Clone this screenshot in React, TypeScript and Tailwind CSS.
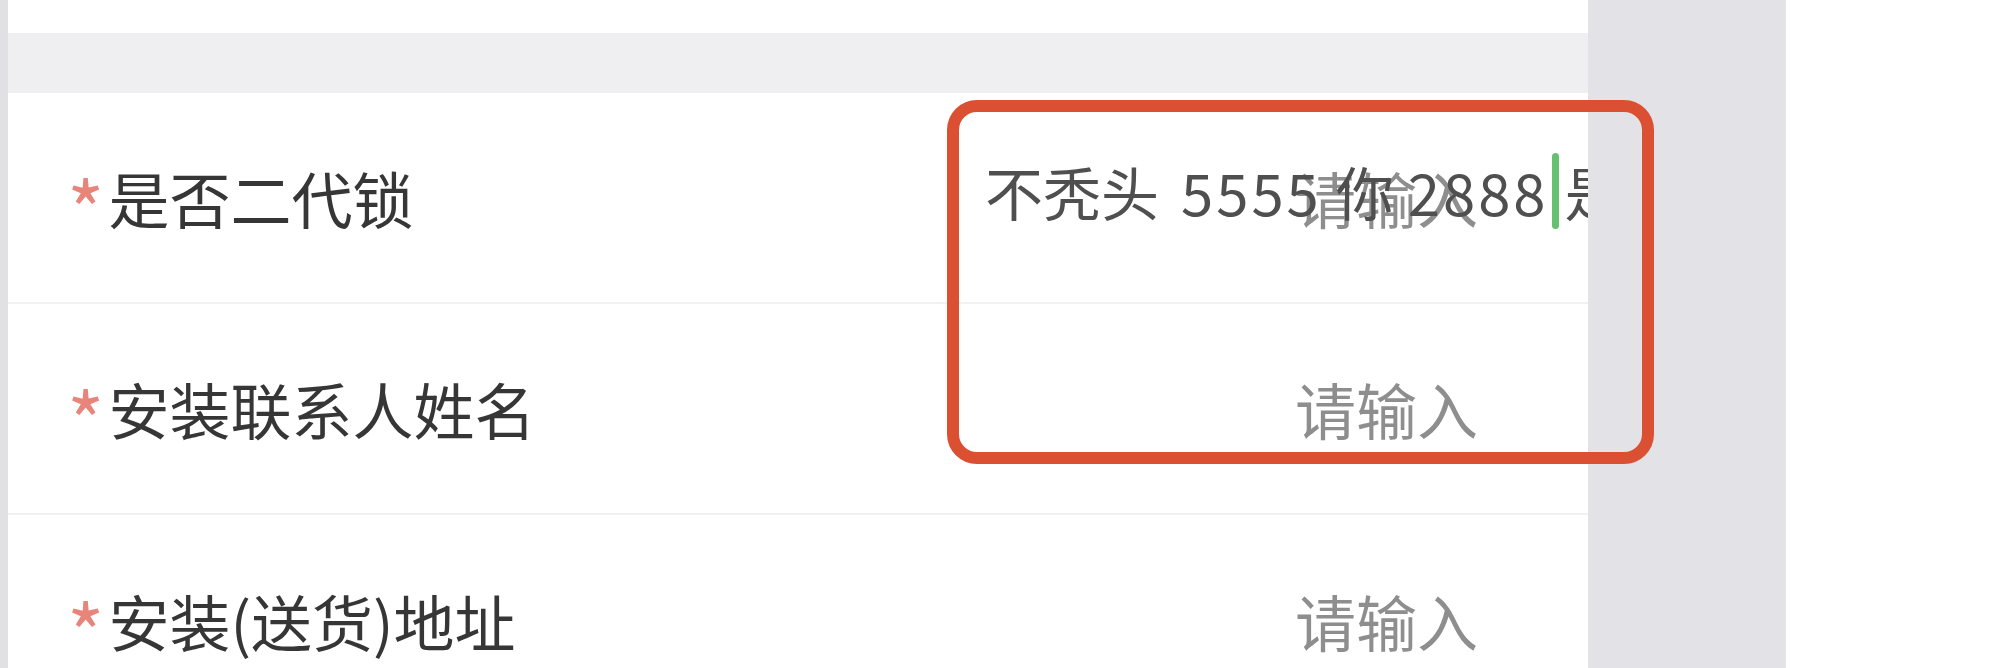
import React from "react";

const font = { fontFamily: '"Noto Sans CJK SC", "Noto Sans", sans-serif' };

type Field = { label: string; placeholder: string };

const fields: Field[] = [
  { label: "是否二代锁", placeholder: "请输入" },
  { label: "安装联系人姓名", placeholder: "请输入" },
  { label: "安装(送货)地址", placeholder: "请输入" },
];

function FormRow({ field, value, last }: { field: Field; value?: boolean; last?: boolean }) {
  return (
    <div
      className={`relative flex h-[211px] shrink-0 items-center bg-white ${
        last ? "" : "border-b-2 border-[#f1f1f3]"
      }`}
    >
      <div className="flex items-center pl-[59px]">
        <span className="relative top-[9px] mr-[4px] text-[80px] leading-none text-[#e8857b]">*</span>
        <span className="text-[61px] leading-none text-[#363636]">{field.label}</span>
      </div>
      <div className="ml-auto pr-[110px] text-[61px] leading-none text-[#8e8e8e]">{field.placeholder}</div>

      {/* typed value overflowing the input, clipped by the side panel */}
      {value && (
        <div className="absolute left-[977px] top-[60px] flex h-[76px] items-center whitespace-nowrap text-[58px] leading-none text-[#4f4f4f]">
          <span>不秃头</span>
          <span className="ml-[22px] tracking-[3px]">5555</span>
          <span className="mx-[14px]">你</span>
          <span className="tracking-[3px]">2888</span>
          <span className="ml-[3px] mr-[6px] h-[76px] w-[7px] rounded-full bg-[#66c072]" />
          <span>是</span>
        </div>
      )}
    </div>
  );
}

export default function App() {
  return (
    <div className="relative flex h-[668px] w-[1996px] overflow-hidden bg-white" style={font}>
      {/* left edge strip */}
      <div className="w-[8px] shrink-0 bg-[#e1e1e5]" />

      {/* form */}
      <div className="flex w-[1580px] shrink-0 flex-col overflow-hidden">
        <div className="h-[33px] shrink-0 bg-white" />
        <div className="h-[60px] shrink-0 bg-[#efeff1]" />
        {fields.map((f, i) => (
          <FormRow key={f.label} field={f} value={i === 0} last={i === fields.length - 1} />
        ))}
      </div>

      {/* side panel */}
      <div className="w-[198px] shrink-0 bg-[#e2e2e7]" />
      <div className="flex-1 bg-white" />

      {/* highlight box */}
      <div className="absolute left-[947px] top-[100px] h-[364px] w-[707px] rounded-[30px] border-[12px] border-[#db4f33]" />
    </div>
  );
}
